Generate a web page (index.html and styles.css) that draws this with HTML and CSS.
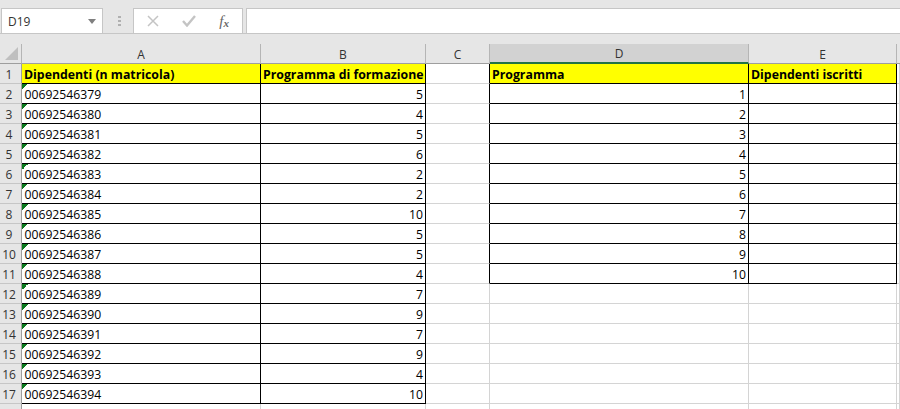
FILE: index.html
```html
<!DOCTYPE html>
<html lang="it">
<head>
    <meta charset="UTF-8">
    <meta name="viewport" content="width=device-width, initial-scale=1.0">
    <title>Foglio di lavoro</title>
    <link rel="stylesheet" href="styles.css">
</head>
<body>
    <div class="formula-bar">
        <div class="name-box">
            <span>D19</span>
            <svg class="name-arrow" width="8" height="5" viewBox="0 0 8 5"><path d="M0 0H8L4 5Z" fill="#7f7f7f"/></svg>
        </div>
        <div class="grip"><i></i><i></i><i></i></div>
        <div class="formula-btns">
            <svg width="12" height="12" viewBox="0 0 12 12"><path d="M1 1L11 11M11 1L1 11" stroke="#c4c4c4" stroke-width="1.5" fill="none"/></svg>
            <svg width="14" height="12" viewBox="0 0 14 12"><path d="M1 6L5 10.5L13 1" stroke="#c4c4c4" stroke-width="2.4" fill="none"/></svg>
            <span class="fx">f<sub>x</sub></span>
        </div>
        <div class="formula-input"></div>
    </div>

    <table class="sheet">
        <colgroup>
            <col class="col-head"><col class="col-a"><col class="col-b"><col class="col-c"><col class="col-d"><col class="col-e"><col class="col-f">
        </colgroup>
        <thead>
            <tr>
                <th class="corner"><svg width="13" height="13" viewBox="0 0 13 13"><path d="M13 0V13H0Z" fill="#bfbfbf"/></svg></th>
                <th>A</th><th>B</th><th>C</th><th class="selected">D</th><th>E</th><th class="last"></th>
            </tr>
        </thead>
        <tbody id="rows"></tbody>
    </table>

    <script>
        const matricole = [379, 380, 381, 382, 383, 384, 385, 386, 387, 388, 389, 390, 391, 392, 393, 394];
        const programmi = [5, 4, 5, 6, 2, 2, 10, 5, 5, 4, 7, 9, 7, 9, 4, 10];

        let html = `<tr class="title-row"><th class="row-head">1</th>
            <td class="box title">Dipendenti (n matricola)</td>
            <td class="box title">Programma di formazione</td>
            <td class="before-box"></td>
            <td class="box title">Programma</td>
            <td class="box title">Dipendenti iscritti</td><td></td></tr>`;

        matricole.forEach((m, i) => {
            const inBox = i < 10;
            html += `<tr><th class="row-head">${i + 2}</th>
                <td class="box code">00692546${m}</td>
                <td class="box num">${programmi[i]}</td>
                <td class="${inBox ? 'before-box' : ''}"></td>
                <td class="${inBox ? 'box num' : ''}">${inBox ? i + 1 : ''}</td>
                <td class="${inBox ? 'box' : ''}"></td><td></td></tr>`;
        });
        html += '<tr><th class="row-head"></th><td></td><td></td><td></td><td></td><td></td><td></td></tr>';
        document.getElementById('rows').innerHTML = html;
    </script>
</body>
</html>
```

FILE: styles.css
```css
* {
    margin: 0;
    padding: 0;
    box-sizing: border-box;
}

html, body {
    height: 100%;
    overflow: hidden;
}

body {
    font-family: "Open Sans", sans-serif;
    background: #e6e6e6;
    color: #000;
}

/* barra della formula */
.formula-bar {
    display: flex;
    align-items: flex-start;
    height: 34px;
    padding: 8px 0 0 1px;
    border-bottom: 1px solid #c6c6c6;
}

.name-box {
    display: flex;
    justify-content: space-between;
    align-items: center;
    width: 102px;
    height: 26px;
    padding: 0 6px 0 6px;
    background: #fff;
    border: 1px solid #c6c6c6;
    font-size: 12px;
    color: #333;
}

.grip {
    display: flex;
    flex-direction: column;
    gap: 2px;
    width: 30px;
    padding: 8px 0 0 15px;
}

.grip i {
    width: 3px;
    height: 2px;
    background: #b0b0b0;
}

.formula-btns {
    display: flex;
    justify-content: space-between;
    align-items: center;
    width: 110px;
    height: 26px;
    padding: 0 13px 0 13px;
    background: #fff;
    border: 1px solid #c6c6c6;
}

.fx {
    font-family: "Liberation Serif", serif;
    font-style: italic;
    font-size: 15px;
    color: #666;
}

.fx sub {
    font-size: 11px;
    font-weight: bold;
    vertical-align: -1px;
    line-height: 0;
}

.formula-input {
    flex: 1;
    height: 26px;
    margin-left: 3px;
    background: #fff;
    border: 1px solid #c6c6c6;
    border-right: none;
}

/* foglio */
.sheet {
    width: 900px;
    margin-top: 10px;
    table-layout: fixed;
    border-collapse: separate;
    border-spacing: 0;
    background: #fff;
    font-size: 12.2px;
}

.col-head { width: 22px; }
.col-a { width: 239px; }
.col-b { width: 165px; }
.col-c { width: 64px; }
.col-d { width: 259px; }
.col-e { width: 148px; }

.sheet td, .sheet th {
    height: 20px;
    overflow: hidden;
    white-space: nowrap;
    border-right: 1px solid #d4d4d4;
    border-bottom: 1px solid #d4d4d4;
}

.sheet td {
    padding: 3px 2px 0 2.5px;
    line-height: 16px;
}

.sheet thead th {
    background: #e6e6e6;
    border-right: 1px solid #b5b5b5;
    border-bottom: 1px solid #9e9e9e;
    padding-top: 2px;
    line-height: 16px;
    font-weight: normal;
    font-size: 12px;
    color: #333;
}

.sheet thead th.selected {
    background: #d2d2d2;
    border-bottom: 2px solid #217346;
    color: #333;
}

.sheet thead th.last {
    border-right: none;
}

.sheet .corner {
    text-align: right;
    padding: 0 3px 0 0;
    line-height: 0;
}

.sheet .row-head {
    background: #e6e6e6;
    border-right: 1px solid #9e9e9e;
    border-bottom: 1px solid #c6c6c6;
    padding: 3px 3px 0 0;
    line-height: 16px;
    font-weight: normal;
    font-size: 12px;
    color: #333;
    text-align: center;
}

.sheet td.box {
    border-right-color: #000;
    border-bottom-color: #000;
}

.sheet td.before-box {
    border-right-color: #000;
}

.sheet td.title {
    padding-left: 2px;
    background: #ff0;
    font-weight: bold;
    font-size: 12.3px;
}

.sheet td.num {
    text-align: right;
}

.sheet td.code {
    background: linear-gradient(135deg, #0b7a1e 50%, transparent 50%) no-repeat 0 0 / 6px 6px;
}
```
